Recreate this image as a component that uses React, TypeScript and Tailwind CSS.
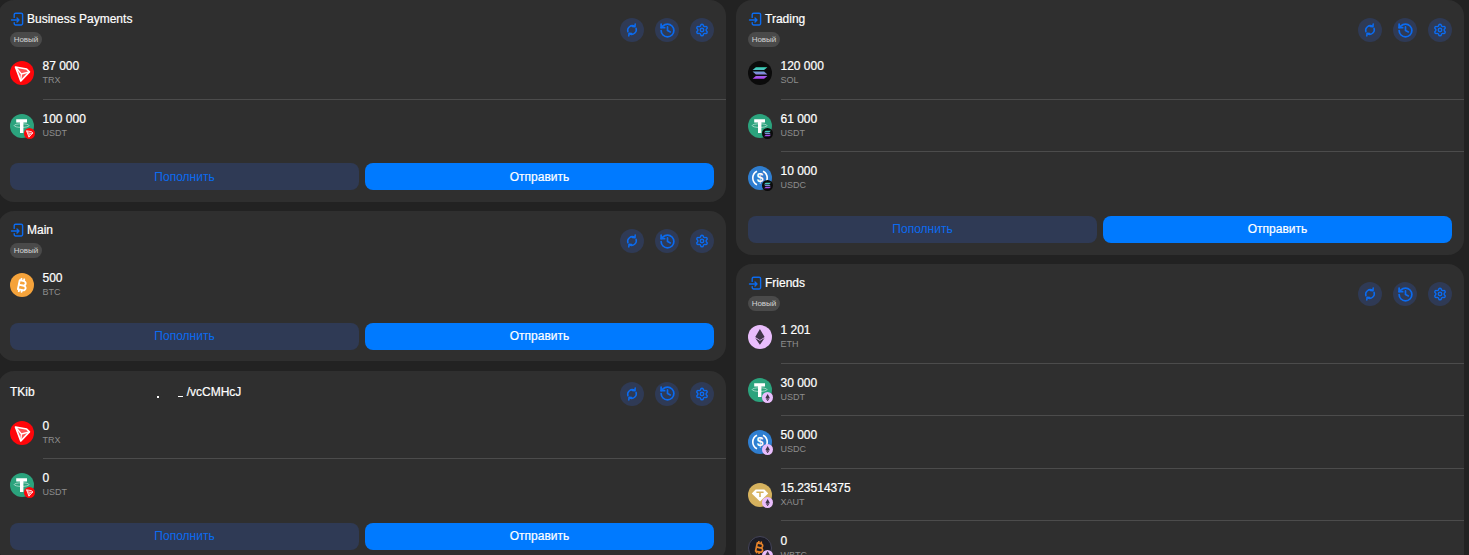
import React from "react";
import { History, Settings } from "lucide-react";
import { FaBitcoinSign, FaEthereum } from "react-icons/fa6";

type IconName = "trx" | "usdt" | "sol" | "usdc" | "eth" | "xaut" | "wbtc" | "btc";

function TronMark() {
  return (
    <g fill="none" stroke="#fff" strokeLinejoin="round">
      <path d="M5.5 6 L16.6 8 L19.4 10.8 L10.8 20 Z" fill="#fff" fillOpacity="0.3" strokeWidth="1.7" />
      <path d="M5.5 6 L11.4 13 L19.4 10.8 M11.4 13 L10.8 20" strokeWidth="1.3" />
    </g>
  );
}

function SolStripes() {
  return (
    <g>
      <defs>
        <linearGradient id="solgrad" gradientUnits="userSpaceOnUse" x1="12" y1="6" x2="12" y2="18">
          <stop offset="0" stopColor="#2fe0b4" />
          <stop offset="0.5" stopColor="#7f8fd8" />
          <stop offset="1" stopColor="#b43cf5" />
        </linearGradient>
      </defs>
      <path fill="url(#solgrad)" d="M7.9 6.2 H19.4 L16.1 9 H4.6 Z" />
      <path fill="url(#solgrad)" d="M4.6 10.6 H16.1 L19.4 13.4 H7.9 Z" />
      <path fill="url(#solgrad)" d="M7.9 15 H19.4 L16.1 17.8 H4.6 Z" />
    </g>
  );
}

function Coin({ name, size }: { name: IconName; size: number }) {
  const box = { width: size, height: size };
  if (name === "trx")
    return (
      <svg style={box} viewBox="0 0 24 24" className="block">
        <circle cx="12" cy="12" r="12" fill="#ff060a" />
        <TronMark />
      </svg>
    );
  if (name === "usdt")
    return (
      <svg style={box} viewBox="0 0 24 24" className="block">
        <circle cx="12" cy="12" r="12" fill="#2ba37d" />
        <path fill="#fff" d="M6.2 5.2 H17 V8.4 H13.4 V19 H10 V8.4 H6.2 Z" />
        <ellipse cx="11.6" cy="11.6" rx="7.4" ry="1.8" fill="none" stroke="#fff" strokeWidth="0.7" opacity="0.75" />
      </svg>
    );
  if (name === "sol")
    return (
      <svg style={box} viewBox="0 0 24 24" className="block">
        <circle cx="12" cy="12" r="12" fill="#0b0b0b" />
        <SolStripes />
      </svg>
    );
  if (name === "usdc")
    return (
      <svg style={box} viewBox="0 0 24 24" className="block">
        <circle cx="12" cy="12" r="12" fill="#2f7ed0" />
        <path d="M9 5.2 A7.6 7.6 0 0 0 9 18.8" fill="none" stroke="#fff" strokeWidth="1.6" />
        <path d="M15 5.2 A7.6 7.6 0 0 1 15 18.8" fill="none" stroke="#fff" strokeWidth="1.6" />
        <text x="12" y="16.4" textAnchor="middle" fontSize="12" fontWeight="700" fill="#fff" fontFamily="'Liberation Sans', sans-serif">$</text>
      </svg>
    );
  if (name === "eth")
    return (
      <div style={box} className="flex items-center justify-center rounded-full bg-[#e9bdfc] text-[#3f3548]">
        <FaEthereum style={{ width: size * 0.66, height: size * 0.66 }} />
      </div>
    );
  if (name === "xaut")
    return (
      <svg style={box} viewBox="0 0 24 24" className="block">
        <circle cx="12" cy="12" r="12" fill="#d6b25e" />
        <path fill="#fff" d="M7.6 6.4 H16.4 L20.2 10.4 L12 18.6 L3.8 10.4 Z" />
        <path fill="#d6b25e" d="M8.4 8.4 H15.6 V9.9 H12.8 V14 H11.2 V9.9 H8.4 Z" />
      </svg>
    );
  if (name === "wbtc")
    return (
      <div style={box} className="flex items-center justify-center rounded-full border border-[#45455a] bg-[#1c1c26] text-[#e8832a]">
        <FaBitcoinSign className="rotate-12" style={{ width: size * 0.56, height: size * 0.56 }} />
      </div>
    );
  return (
    <div style={box} className="flex items-center justify-center rounded-full bg-[#f5a33b] text-white">
      <FaBitcoinSign className="rotate-12" style={{ width: size * 0.62, height: size * 0.62 }} />
    </div>
  );
}

function PhoneIcon() {
  return (
    <svg width="14" height="14" viewBox="0 0 14 14" fill="none" stroke="#0b6bf0" strokeWidth="1.4" strokeLinecap="round" strokeLinejoin="round" className="shrink-0">
      <path d="M4.2 5.4 V2.6 A1.4 1.4 0 0 1 5.6 1.2 H11.2 A1.4 1.4 0 0 1 12.6 2.6 V11.6 A1.4 1.4 0 0 1 11.2 13 H5.6 A1.4 1.4 0 0 1 4.2 11.6 V10.6" />
      <path d="M1.5 8 H9 M7 6 L9 8 L7 10" />
    </svg>
  );
}

function LoopIcon() {
  return (
    <svg width="14" height="14" viewBox="0 0 24 24" fill="none" stroke="currentColor" strokeWidth="2.6" strokeLinecap="round" strokeLinejoin="round">
      <path d="M5 15 A8 8 0 0 1 16.5 5.6" />
      <path d="M17.5 1.8 L17 6.3 L12.6 6.2" />
      <path d="M19 9 A8 8 0 0 1 7.5 18.4" />
      <path d="M6.5 22.2 L7 17.7 L11.4 17.8" />
    </svg>
  );
}

type Token = { amount: string; sym: string; icon: IconName; chain?: IconName };
type CardData = { title?: string; tokens: Token[]; extra?: string };

function Row({ token, last }: { token: Token; last: boolean }) {
  return (
    <div className={last ? "flex gap-[8.5px] h-[49.5px]" : "flex gap-[8.5px] h-[52.6px]"}>
      <div className="relative h-6 w-6 shrink-0">
        <Coin name={token.icon} size={24} />
        {token.chain && (
          <div className="absolute -bottom-px -right-px">
            <Coin name={token.chain} size={11} />
          </div>
        )}
      </div>
      <div className={last ? "-mt-[3px] -mr-3 h-[41px] flex-1" : "-mt-[3px] -mr-3 h-[41.5px] flex-1 border-b border-[#4c4c4c]"}>
        <div className="text-[12px] leading-4 text-white [-webkit-text-stroke:0.2px_white]">{token.amount}</div>
        <div className="text-[9px] leading-[13px] text-[#8d8d8d]">{token.sym}</div>
      </div>
    </div>
  );
}

function Actions() {
  const cls = "flex h-6 w-6 items-center justify-center rounded-full bg-[#2f3a55] text-[#0b6bf0]";
  return (
    <div className="flex shrink-0 gap-[11px]">
      <div className={cls}><LoopIcon /></div>
      <div className={cls}><History size={17} strokeWidth={2.4} /></div>
      <div className={cls}><Settings size={14} strokeWidth={2.4} /></div>
    </div>
  );
}

function FullCard({ data }: { data: CardData }) {
  const titleCls = "flex h-4 items-center text-[12px] leading-4 text-white [-webkit-text-stroke:0.2px_white]";
  const single = data.tokens.length === 1;
  return (
    <div className={`rounded-2xl bg-[#2f2f2f] px-3 pt-[11px] ${single ? "pb-[11px]" : "pb-3"} ${data.extra ?? ""}`}>
      <div className="flex items-center justify-between">
        {data.title ? (
          <div className="pb-[2px]">
            <div className={`${titleCls} gap-[3px]`}>
              <PhoneIcon />
              <span>{data.title}</span>
            </div>
            <div className="mt-[5px] flex h-[15px] w-8 items-center justify-center rounded-full bg-[#4a4a4a] text-[8px] leading-none text-[#d4d4d4]">
              Новый
            </div>
          </div>
        ) : (
          <div className="h-[22px] pt-px">
            <div className={titleCls}>
              <span>TKib</span>
              <span className="ml-[122px] mt-[11px] h-[2px] w-[2px] bg-white" />
              <span className="ml-[19px] mt-[9px] h-px w-[5px] bg-white" />
              <span className="ml-[4px]">/vcCMHcJ</span>
            </div>
          </div>
        )}
        <Actions />
      </div>
      <div className={data.title ? (single ? "mt-[13px]" : "mt-3") : "mt-[15px]"}>
        {data.tokens.map((t, i) => (
          <Row key={t.sym} token={t} last={i === data.tokens.length - 1} />
        ))}
      </div>
      <div className="flex gap-[6px]">
        <div className="flex h-[27px] flex-1 items-center justify-center rounded-lg bg-[#2f3a55] text-[12px] text-[#0b6bf0]">Пополнить</div>
        <div className="flex h-[27px] flex-1 items-center justify-center rounded-lg bg-[#007aff] text-[12px] text-white [-webkit-text-stroke:0.2px_white]">Отправить</div>
      </div>
    </div>
  );
}

const left: CardData[] = [
  { title: "Business Payments", tokens: [
    { amount: "87 000", sym: "TRX", icon: "trx" },
    { amount: "100 000", sym: "USDT", icon: "usdt", chain: "trx" },
  ] },
  { title: "Main", tokens: [{ amount: "500", sym: "BTC", icon: "btc" }] },
  { extra: "mt-px", tokens: [
    { amount: "0", sym: "TRX", icon: "trx" },
    { amount: "0", sym: "USDT", icon: "usdt", chain: "trx" },
  ] },
];

const right: CardData[] = [
  { title: "Trading", tokens: [
    { amount: "120 000", sym: "SOL", icon: "sol" },
    { amount: "61 000", sym: "USDT", icon: "usdt", chain: "sol" },
    { amount: "10 000", sym: "USDC", icon: "usdc", chain: "sol" },
  ] },
  { title: "Friends", tokens: [
    { amount: "1 201", sym: "ETH", icon: "eth" },
    { amount: "30 000", sym: "USDT", icon: "usdt", chain: "eth" },
    { amount: "50 000", sym: "USDC", icon: "usdc", chain: "eth" },
    { amount: "15.23514375", sym: "XAUT", icon: "xaut", chain: "eth" },
    { amount: "0", sym: "WBTC", icon: "wbtc", chain: "eth" },
  ] },
];

export default function App() {
  return (
    <div className="h-[555px] overflow-hidden bg-[#222222] font-['Liberation_Sans',Arial,sans-serif]">
      <div className="-ml-[2px] grid w-[1466px] grid-cols-2 items-start gap-[10px]">
        <div className="flex flex-col gap-[9px]">
          {left.map((c, i) => <FullCard key={i} data={c} />)}
        </div>
        <div className="flex flex-col gap-[9.5px]">
          {right.map((c, i) => <FullCard key={i} data={c} />)}
        </div>
      </div>
    </div>
  );
}
